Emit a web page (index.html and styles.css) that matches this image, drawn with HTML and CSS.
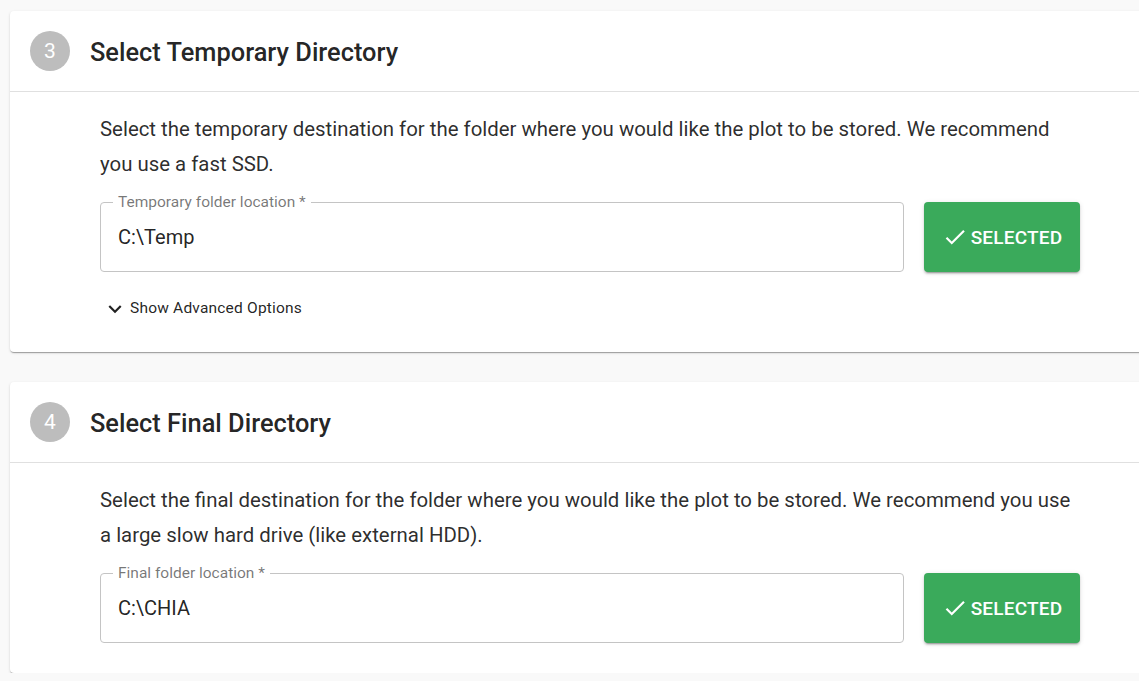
FILE: index.html
```html
<!DOCTYPE html>
<html lang="en">
  <head>
    <meta charset="UTF-8" />
    <meta name="viewport" content="width=device-width, initial-scale=1.0" />
    <title>Plot directories</title>
    <link rel="stylesheet" href="styles.css">
  </head>
  <body>
    <div class="steps">
      <div class="card">
        <div class="cardHeader">
          <div class="stepNum">3</div>
          <h2 class="title">Select Temporary Directory</h2>
        </div>
        <div class="cardBody">
          <p class="hint">
            Select the temporary destination for the folder where you would like the plot to be stored. We recommend
            you use a fast SSD.
          </p>
          <div class="row">
            <div class="field">
              <span class="fieldLabel">Temporary folder location *</span>
              <div class="fieldValue">C:\Temp</div>
            </div>
            <button class="selectBtn">
              <svg viewBox="0 0 24 24" width="26" height="26"><path d="M9 16.17L4.83 12l-1.42 1.41L9 19 21 7l-1.41-1.41z" fill="currentColor"/></svg>
              SELECTED
            </button>
          </div>
          <div class="advanced">
            <svg viewBox="0 0 24 24" width="26" height="26"><path d="M16.59 8.59L12 13.17 7.41 8.59 6 10l6 6 6-6z" fill="currentColor"/></svg>
            Show Advanced Options
          </div>
        </div>
      </div>

      <div class="card">
        <div class="cardHeader">
          <div class="stepNum">4</div>
          <h2 class="title">Select Final Directory</h2>
        </div>
        <div class="cardBody">
          <p class="hint">
            Select the final destination for the folder where you would like the plot to be stored. We recommend you use
            a large slow hard drive (like external HDD).
          </p>
          <div class="row">
            <div class="field">
              <span class="fieldLabel">Final folder location *</span>
              <div class="fieldValue">C:\CHIA</div>
            </div>
            <button class="selectBtn">
              <svg viewBox="0 0 24 24" width="26" height="26"><path d="M9 16.17L4.83 12l-1.42 1.41L9 19 21 7l-1.41-1.41z" fill="currentColor"/></svg>
              SELECTED
            </button>
          </div>
        </div>
      </div>
    </div>
  </body>
</html>
```

FILE: styles.css
```css
body {
  margin: 0;
  background: #f9f9f9;
  font-family: Roboto, "Liberation Sans", sans-serif;
  color: rgba(0, 0, 0, 0.87);
  overflow: hidden;
}
.steps {
  display: flex;
  flex-direction: column;
  gap: 30px;
  padding: 11px 0 0 10px;
}
.card {
  width: 1160px;
  background: #fff;
  border-radius: 4px;
  box-shadow: 0 2px 1px -1px rgba(0, 0, 0, 0.2), 0 1px 1px 0 rgba(0, 0, 0, 0.14), 0 1px 3px 0 rgba(0, 0, 0, 0.12);
}
.cardHeader {
  display: flex;
  align-items: center;
  gap: 20px;
  height: 80px;
  padding-left: 20px;
  border-bottom: 1px solid #e0e0e0;
}
.stepNum {
  width: 40px;
  height: 40px;
  border-radius: 50%;
  background: #bdbdbd;
  color: #fff;
  font-size: 21px;
  display: flex;
  align-items: center;
  justify-content: center;
}
.title {
  margin: 0;
  padding-top: 2px;
  font-size: 25.4px;
  font-weight: 500;
  color: rgba(0, 0, 0, 0.87);
}
.cardBody {
  width: 980px;
  padding: 20px 0 30px 90px;
}
.hint {
  margin: 0;
  font-size: 20.4px;
  line-height: 35px;
  color: rgba(0, 0, 0, 0.84);
}
.row {
  display: flex;
  gap: 20px;
  margin-top: 20px;
}
.field {
  flex: 1;
  position: relative;
  height: 68px;
  border: 1px solid #c4c4c4;
  border-radius: 4px;
  display: flex;
  align-items: center;
}
.fieldLabel {
  position: absolute;
  top: -10px;
  left: 12px;
  padding: 0 5px;
  background: #fff;
  font-size: 15.5px;
  color: rgba(0, 0, 0, 0.54);
}
.fieldValue {
  padding-left: 17px;
  font-size: 20px;
}
.selectBtn {
  width: 156px;
  height: 70px;
  border: none;
  border-radius: 4px;
  background: #3aaa5b;
  color: #fff;
  font-family: Roboto, "Liberation Sans", sans-serif;
  font-size: 19px;
  font-weight: 500;
  letter-spacing: 0.2px;
  display: flex;
  align-items: center;
  justify-content: center;
  gap: 3px;
  box-shadow: 0 3px 1px -2px rgba(0, 0, 0, 0.2), 0 2px 2px 0 rgba(0, 0, 0, 0.14), 0 1px 5px 0 rgba(0, 0, 0, 0.12);
}
.advanced {
  display: flex;
  align-items: center;
  gap: 2px;
  margin: 22px 0 0 2px;
  height: 28px;
  font-size: 15.5px;
  letter-spacing: 0.2px;
  color: rgba(0, 0, 0, 0.87);
}
.advanced svg {
  margin-top: 1px;
}
```
